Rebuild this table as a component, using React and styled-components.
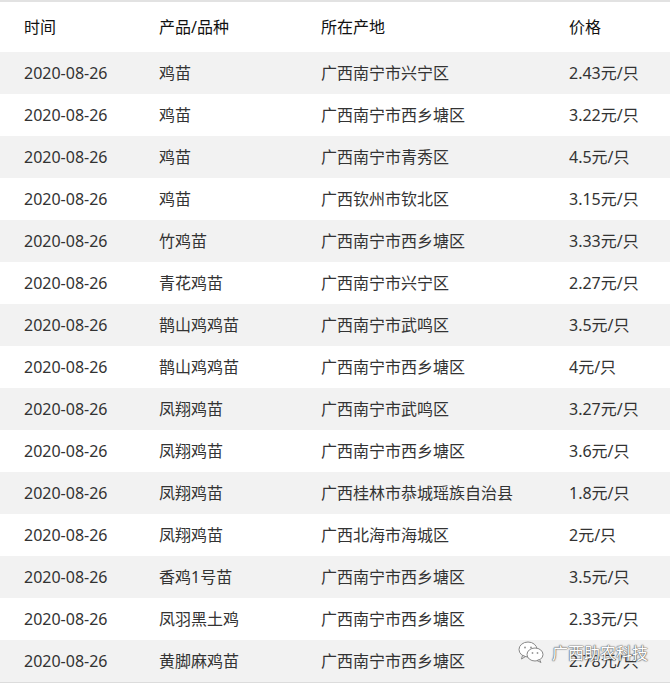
import React from "react";
import styled, { createGlobalStyle } from "styled-components";

const GlobalStyle = createGlobalStyle`
  html, body {
    margin: 0;
    padding: 0;
    background: #fff;
  }
  body {
    font-family: "Noto Sans", "Noto Sans CJK SC", sans-serif;
  }
`;

const Wrapper = styled.div`
  position: relative;
  width: 670px;
  border-top: 2px solid #e2e2e2;
  border-bottom: 1px solid #dcdcdc;
`;

const Row = styled.div`
  display: grid;
  grid-template-columns: 135px 162px 248px 1fr;
  align-items: center;
  padding-left: 24px;
  height: ${props => (props.head ? "50px" : "42px")};
  background: ${props => (props.gray ? "#f2f2f2" : "#fff")};
  color: ${props => (props.head ? "#111" : "#333")};
  font-size: 16px;
  line-height: 1;
  white-space: nowrap;
`;

const Cell = styled.div`
  padding-bottom: ${props => (props.head ? "1px" : "0")};
`;

const Watermark = styled.div`
  position: absolute;
  right: 22px;
  bottom: 18px;
  display: flex;
  align-items: center;
  gap: 8px;
  color: #fff;
  font-size: 16px;
  font-family: "Noto Sans CJK SC", sans-serif;
  text-shadow: 0 0 1px #555, 0 0 1px #555, 0 0 2px #777;
  pointer-events: none;
`;

const rows = [
  ["鸡苗", "广西南宁市兴宁区", "2.43元/只"],
  ["鸡苗", "广西南宁市西乡塘区", "3.22元/只"],
  ["鸡苗", "广西南宁市青秀区", "4.5元/只"],
  ["鸡苗", "广西钦州市钦北区", "3.15元/只"],
  ["竹鸡苗", "广西南宁市西乡塘区", "3.33元/只"],
  ["青花鸡苗", "广西南宁市兴宁区", "2.27元/只"],
  ["鹊山鸡鸡苗", "广西南宁市武鸣区", "3.5元/只"],
  ["鹊山鸡鸡苗", "广西南宁市西乡塘区", "4元/只"],
  ["凤翔鸡苗", "广西南宁市武鸣区", "3.27元/只"],
  ["凤翔鸡苗", "广西南宁市西乡塘区", "3.6元/只"],
  ["凤翔鸡苗", "广西桂林市恭城瑶族自治县", "1.8元/只"],
  ["凤翔鸡苗", "广西北海市海城区", "2元/只"],
  ["香鸡1号苗", "广西南宁市西乡塘区", "3.5元/只"],
  ["凤羽黑土鸡", "广西南宁市西乡塘区", "2.33元/只"],
  ["黄脚麻鸡苗", "广西南宁市西乡塘区", "2.78元/只"],
];

const WeChatIcon = () => (
  <svg width="26" height="22" viewBox="0 0 26 22">
    <g fill="#fff" stroke="#888" strokeWidth="1">
      <ellipse cx="10" cy="8.5" rx="9" ry="7.5" />
      <path d="M4.5 14.5 L3.5 18 L7.5 15.5 Z" />
      <ellipse cx="17" cy="13.5" rx="8" ry="6.5" />
      <path d="M21.5 18.5 L23 21.5 L19 19.5 Z" />
    </g>
    <g fill="#999">
      <circle cx="7" cy="6.5" r="1" />
      <circle cx="13" cy="6.5" r="1" />
      <circle cx="14.5" cy="12" r="0.9" />
      <circle cx="19.5" cy="12" r="0.9" />
    </g>
  </svg>
);

export default () => {
  return (
    <>
      <GlobalStyle />
      <Wrapper>
        <Row head>
          <Cell head>时间</Cell>
          <Cell head>产品/品种</Cell>
          <Cell head>所在产地</Cell>
          <Cell head>价格</Cell>
        </Row>
        {rows.map((r, i) => (
          <Row key={i} gray={i % 2 === 0}>
            <Cell>2020-08-26</Cell>
            <Cell>{r[0]}</Cell>
            <Cell>{r[1]}</Cell>
            <Cell>{r[2]}</Cell>
          </Row>
        ))}
        <Watermark>
          <WeChatIcon />
          广西助农科技
        </Watermark>
      </Wrapper>
    </>
  );
};
